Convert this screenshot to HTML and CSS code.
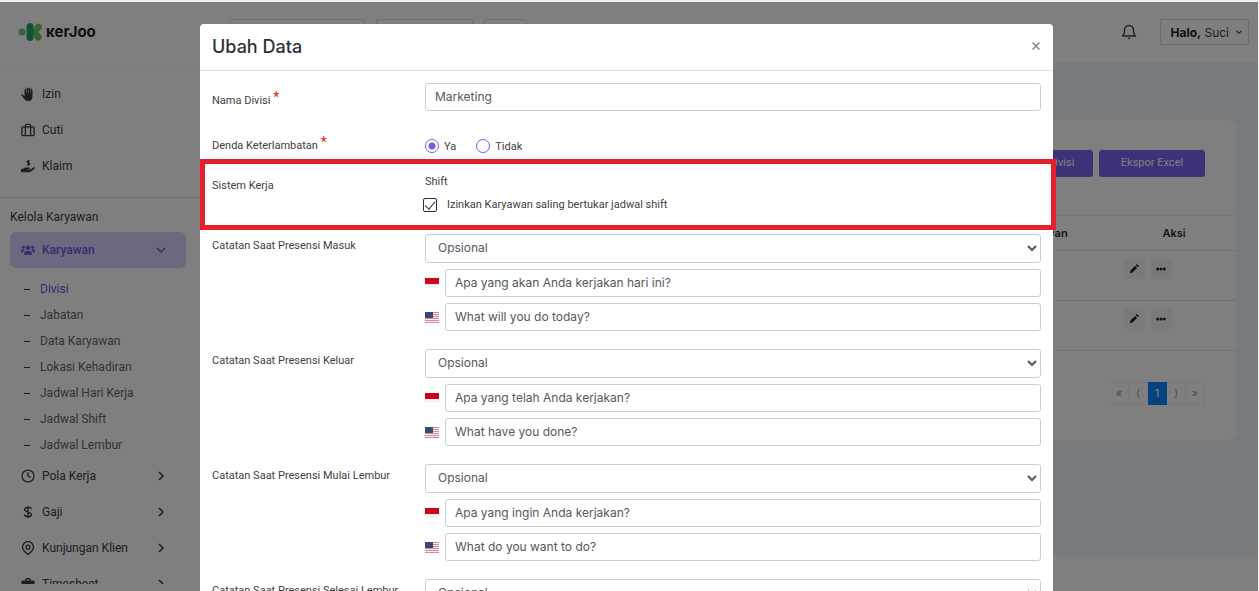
FILE: index.html
```html
<!DOCTYPE html>
<html lang="id">
<head>
<meta charset="utf-8">
<title>Kerjoo - Divisi</title>
<link rel="stylesheet" href="styles.css">
</head>
<body>
<div class="app">
  <aside class="sidebar">
    <a class="brand" href="#">
      <svg class="brand-mark" width="24" height="20" viewBox="0 0 24 20" aria-hidden="true">
        <circle cx="4" cy="10" r="3.5" fill="#74c365"/>
        <path d="M14 9.500 17.500 3a3.400 3.400 0 0 1 5.500 4.200L20.500 10l2.500 3a3.400 3.400 0 0 1-5.500 4.200L14 10.500Z" fill="#74c365"/>
        <rect x="8.500" y="1" width="7" height="18" rx="3.500" fill="#26a081"/>
      </svg>
      <span class="brand-name">ĸerJoo</span>
    </a>
    <nav class="menu">
      <a class="item" href="#"><svg class="icon" viewBox="0 0 16 16" aria-hidden="true"><path fill="currentColor" d="M4 3.200a.9.900 0 0 1 1.900 0V7h.5V1.700a.9.900 0 0 1 1.900 0V7h.5V1.400a.9.900 0 0 1 1.900 0V7h.5V3a.9.900 0 0 1 1.900 0V11c0 3-1.800 5-4.800 5-2.300 0-3.600-.9-4.700-2.600L.5 9.800c-.6-1 .7-1.900 1.500-1.100L4 10.500z"/></svg><span>Izin</span></a>
      <a class="item" href="#"><svg class="icon line" viewBox="0 0 16 16" aria-hidden="true"><rect x="1" y="4.500" width="14" height="10" rx="1.500"/><path d="M5 14.500V3a1.500 1.500 0 0 1 1.500-1.500h3A1.500 1.500 0 0 1 11 3v11.500"/></svg><span>Cuti</span></a>
      <a class="item" href="#"><svg class="icon" viewBox="0 0 16 16" aria-hidden="true"><path fill="currentColor" d="M0 11h2.500c1.500-1.300 2.500-1.300 4-1.300h3c1.300 0 1.300 1.800 0 1.800H7.500v.5h3l3.500-2.300c1.300-.8 2.500.6 1.500 1.500l-4 3.200c-.5.400-1 .6-1.600.6H0z"/><path d="M10 2.500c-.5-.8-3-.7-3 .6 0 1.400 3 .8 3 2.200 0 1.300-2.600 1.300-3.200.4M8.500 1v7" fill="none" stroke="currentColor" stroke-width="1.300"/></svg><span>Klaim</span></a>
    </nav>
    <h2 class="group-title">Kelola Karyawan</h2>
    <nav class="menu-scroll">
      <a class="item active" href="#"><svg class="icon" viewBox="0 0 16 16" aria-hidden="true"><g fill="currentColor"><circle cx="8" cy="5.500" r="2.600"/><circle cx="2.700" cy="4.800" r="1.700"/><circle cx="13.300" cy="4.800" r="1.700"/><path d="M3.500 13.500v-1.800C3.500 10 5 9 6.500 9h3c1.500 0 3 1 3 2.700v1.800zM0 10.500V9c0-1.300.8-2 2-2h1.500l.8.700C3.200 8.500 2.700 9.300 2.600 10.500zM16 10.500V9c0-1.300-.8-2-2-2h-1.500l-.8.700c1.100.8 1.600 1.600 1.700 2.800z"/></g></svg><span>Karyawan</span><svg class="chev" viewBox="0 0 12 12" aria-hidden="true"><path d="m2 4 4 4 4-4"/></svg></a>
      <ul class="sub">
        <li class="current"><a href="#">Divisi</a></li>
        <li><a href="#">Jabatan</a></li>
        <li><a href="#">Data Karyawan</a></li>
        <li><a href="#">Lokasi Kehadiran</a></li>
        <li><a href="#">Jadwal Hari Kerja</a></li>
        <li><a href="#">Jadwal Shift</a></li>
        <li><a href="#">Jadwal Lembur</a></li>
      </ul>
      <a class="item" href="#"><svg class="icon line" viewBox="0 0 16 16" aria-hidden="true"><circle cx="8" cy="8" r="6.800"/><path d="M8 3.800V8l2.800 1.600"/></svg><span>Pola Kerja</span><svg class="chev" viewBox="0 0 12 12" aria-hidden="true"><path d="m4 2 4 4-4 4"/></svg></a>
      <a class="item" href="#"><svg class="icon line" viewBox="0 0 16 16" aria-hidden="true"><path d="M8 .8v14.400M11.800 4.800C11.600 2 4.200 2 4.200 5.200S12 7.800 12 11s-8 3-8-.2"/></svg><span>Gaji</span><svg class="chev" viewBox="0 0 12 12" aria-hidden="true"><path d="m4 2 4 4-4 4"/></svg></a>
      <a class="item" href="#"><svg class="icon line" viewBox="0 0 16 16" aria-hidden="true"><path d="M8 15.300S1.800 11 1.800 6.900a6.200 6.200 0 0 1 12.400 0C14.200 11 8 15.300 8 15.300z"/><circle cx="8" cy="7" r="2.200"/></svg><span>Kunjungan Klien</span><svg class="chev" viewBox="0 0 12 12" aria-hidden="true"><path d="m4 2 4 4-4 4"/></svg></a>
      <a class="item" href="#"><svg class="icon" viewBox="0 0 16 16" aria-hidden="true"><path fill="currentColor" d="M5 4V2.500C5 1.700 5.700 1 6.500 1h3c.8 0 1.500.7 1.500 1.500V4h3c.8 0 1.500.7 1.500 1.500V14H.5V5.500C.5 4.700 1.200 4 2 4zm1.500 0h3V2.500h-3z"/></svg><span>Timesheet</span><svg class="chev" viewBox="0 0 12 12" aria-hidden="true"><path d="m4 2 4 4-4 4"/></svg></a>
    </nav>
  </aside>

  <div class="content">
    <header class="topbar">
      <div class="chips"><span class="chip wide"></span><span class="chip mid"></span><span class="chip small"></span></div>
      <button class="bell" type="button" aria-label="Notifikasi"><svg width="16" height="16" viewBox="0 0 16 16" aria-hidden="true"><path d="M1.500 12h13c-1.300-1.200-2-2.200-2-4.500V6a4.500 4.500 0 0 0-9 0v1.500c0 2.300-.7 3.300-2 4.500z" fill="none" stroke="currentColor" stroke-width="1.400" stroke-linejoin="round"/><path d="M6.300 13.800h3.400L8 15.500z" fill="currentColor"/></svg></button>
      <button class="user" type="button"><span><b>Halo,</b> Suci</span><svg width="8" height="8" viewBox="0 0 12 12" aria-hidden="true"><path d="m2 4 4 4 4-4" fill="none" stroke="currentColor" stroke-width="1.600"/></svg></button>
    </header>
    <main class="main">
      <section class="card">
        <div class="actions"><button class="primary" type="button">Tambah Divisi</button><button class="primary" type="button">Ekspor Excel</button></div>
        <table class="grid">
          <thead><tr><th></th><th class="count">Jumlah Karyawan</th><th class="act">Aksi</th></tr></thead>
          <tbody>
            <tr><td></td><td></td><td><div class="tools"><button type="button" aria-label="Ubah"><svg viewBox="0 0 12 12" aria-hidden="true"><path fill="currentColor" d="M1 11l.7-3.200L7.200 2.300l2.500 2.500-5.500 5.500zM8 1.500l.8-.8c.4-.4 1-.4 1.400 0l1.100 1.100c.4.400.4 1 0 1.400l-.8.800z"/></svg></button><button type="button" aria-label="Lainnya"><svg viewBox="0 0 12 12" aria-hidden="true"><g fill="currentColor"><circle cx="2" cy="6" r="1.800"/><circle cx="6" cy="6" r="1.800"/><circle cx="10" cy="6" r="1.800"/></g></svg></button></div></td></tr>
            <tr><td></td><td></td><td><div class="tools"><button type="button" aria-label="Ubah"><svg viewBox="0 0 12 12" aria-hidden="true"><path fill="currentColor" d="M1 11l.7-3.200L7.200 2.300l2.500 2.500-5.500 5.500zM8 1.500l.8-.8c.4-.4 1-.4 1.400 0l1.100 1.100c.4.400.4 1 0 1.400l-.8.800z"/></svg></button><button type="button" aria-label="Lainnya"><svg viewBox="0 0 12 12" aria-hidden="true"><g fill="currentColor"><circle cx="2" cy="6" r="1.800"/><circle cx="6" cy="6" r="1.800"/><circle cx="10" cy="6" r="1.800"/></g></svg></button></div></td></tr>
          </tbody>
        </table>
        <nav class="pager"><a href="#">«</a><a href="#">⟨</a><a class="on" href="#">1</a><a href="#">⟩</a><a href="#">»</a></nav>
      </section>
    </main>
    <footer class="footer"></footer>
  </div>

  <div class="backdrop">
    <form class="dialog" role="dialog" aria-labelledby="dialog-title">
      <div class="dialog-head"><h1 id="dialog-title">Ubah Data</h1><button class="close" type="button" aria-label="Tutup"><svg width="10" height="10" viewBox="0 0 10 10" aria-hidden="true"><path d="m1.500 1.500 7 7m0-7-7 7" stroke="currentColor" stroke-width="1.500"/></svg></button></div>
      <div class="dialog-body">
        <div class="row name-row"><label class="label" for="nama">Nama Divisi <sup>*</sup></label><input class="control" id="nama" type="text" value="Marketing"></div>
        <div class="row fine-row" role="radiogroup" aria-labelledby="denda"><span class="label" id="denda">Denda Keterlambatan <sup>*</sup></span>
          <div class="radios"><label><input type="radio" name="denda" checked>Ya</label><label><input type="radio" name="denda">Tidak</label></div></div>
        <div class="row shift-row"><span class="label">Sistem Kerja</span>
          <div class="shift"><span class="shift-name">Shift</span><label class="check"><input type="checkbox" checked>Izinkan Karyawan saling bertukar jadwal shift</label></div></div>

        <div class="row note-row"><label class="label" for="masuk">Catatan Saat Presensi Masuk</label>
          <div class="notes"><select class="control" id="masuk"><option>Opsional</option></select>
            <div class="lang"><svg class="flag" viewBox="0 0 14 10" role="img" aria-label="Indonesia"><path fill="#d0021b" d="M0 0h14v6H0z"/><path fill="#f7f2f3" d="M0 6h14v4H0z"/></svg><input class="control" type="text" aria-label="Indonesia" value="Apa yang akan Anda kerjakan hari ini?"></div>
            <div class="lang"><svg class="flag us" viewBox="0 0 14 11" role="img" aria-label="English"><use href="#us"/></svg><input class="control" type="text" aria-label="English" value="What will you do today?"></div></div></div>

        <div class="row note-row"><label class="label" for="keluar">Catatan Saat Presensi Keluar</label>
          <div class="notes"><select class="control" id="keluar"><option>Opsional</option></select>
            <div class="lang"><svg class="flag" viewBox="0 0 14 10" role="img" aria-label="Indonesia"><path fill="#d0021b" d="M0 0h14v6H0z"/><path fill="#f7f2f3" d="M0 6h14v4H0z"/></svg><input class="control" type="text" aria-label="Indonesia" value="Apa yang telah Anda kerjakan?"></div>
            <div class="lang"><svg class="flag us" viewBox="0 0 14 11" role="img" aria-label="English"><use href="#us"/></svg><input class="control" type="text" aria-label="English" value="What have you done?"></div></div></div>

        <div class="row note-row"><label class="label" for="mulai">Catatan Saat Presensi Mulai Lembur</label>
          <div class="notes"><select class="control" id="mulai"><option>Opsional</option></select>
            <div class="lang"><svg class="flag" viewBox="0 0 14 10" role="img" aria-label="Indonesia"><path fill="#d0021b" d="M0 0h14v6H0z"/><path fill="#f7f2f3" d="M0 6h14v4H0z"/></svg><input class="control" type="text" aria-label="Indonesia" value="Apa yang ingin Anda kerjakan?"></div>
            <div class="lang"><svg class="flag us" viewBox="0 0 14 11" role="img" aria-label="English"><use href="#us"/></svg><input class="control" type="text" aria-label="English" value="What do you want to do?"></div></div></div>

        <div class="row note-row"><label class="label" for="selesai">Catatan Saat Presensi Selesai Lembur</label>
          <div class="notes"><select class="control" id="selesai"><option>Opsional</option></select></div></div>
      </div>
    </form>
  </div>
</div>
<svg class="defs" width="0" height="0" aria-hidden="true"><defs><g id="us"><path fill="#fbeef0" d="M0 0h14v11H0z"/><path stroke="#d98a99" stroke-width="1" d="M0 .5h14M0 2.500h14M0 4.500h14M0 6.500h14M0 8.500h14M0 10.500h14"/><path fill="#3c4870" d="M0 0h8v6H0z"/></g></defs></svg>
</body>
</html>
```
FILE: styles.css
```css
* { box-sizing: border-box; }

body {
  margin: 0;
  height: 100vh;
  overflow: hidden;
  border-top: 2px solid #eaf0f1;
  border-right: 1px solid #f4f4f4;
  font-family: Inter, "Open Sans", sans-serif;
  font-size: 11px;
  color: #3c3f44;
}

a { color: inherit; text-decoration: none; }
button { font: inherit; color: inherit; cursor: pointer; }

.app {
  position: relative;
  display: flex;
  height: 100%;
  overflow: hidden;
  background: #fff;
}

/* Sidebar */
.sidebar {
  flex: 0 0 200px;
  display: flex;
  flex-direction: column;
  padding-bottom: 7px;
  font-family: Roboto, sans-serif;
  font-size: 12px;
  color: #3a3d42;
}

.brand {
  flex: none;
  display: flex;
  align-items: center;
  gap: 4px;
  height: 69px;
  padding: 0 0 9px 18px;
  border-bottom: 1px solid #f6f6f6;
}

.brand-name {
  font: 700 15px/20px Inter, sans-serif;
  color: #1d1d2b;
}

.menu {
  flex: none;
  padding: 5px 10px 13px;
  border-bottom: 1px solid #dcdcdc;
}

.item {
  display: flex;
  align-items: center;
  gap: 7px;
  height: 36px;
  padding: 0 19px 0 11px;
  border-radius: 6px;
}

.icon { flex: none; width: 14px; height: 14px; }
.line { fill: none; stroke: currentColor; stroke-width: 1.5; stroke-linejoin: round; }
.chev { width: 12px; height: 12px; margin-left: auto; fill: none; stroke: currentColor; stroke-width: 1.5; }

.group-title {
  flex: none;
  margin: 0;
  padding: 12px 10px 8px;
  font-size: 12px;
  line-height: 14px;
  font-weight: 400;
}

.menu-scroll {
  flex: 1;
  min-height: 0;
  padding: 0 14px 0 10px;
  overflow: hidden;
}

.active { background: #d8d0ff; color: #6a5ad8; font-weight: 500; }

.sub {
  margin: 0;
  padding: 8px 0 0 14px;
  list-style: none;
  color: #63666a;
}

.sub li { display: flex; align-items: center; gap: 10px; height: 26px; }
.sub li::before { content: ""; width: 6px; height: 1px; background: #3a3d42; }
.sub .current { color: #6a5ad8; }

/* Page area */
.content { flex: 1; display: flex; flex-direction: column; min-width: 0; }

.topbar {
  flex: none;
  display: flex;
  align-items: center;
  height: 60px;
  padding: 0 9px 0 29px;
}

.chips { display: flex; gap: 11px; margin-right: auto; }
.chip { height: 26px; border: 1px solid #e2e2e2; border-radius: 3px; }
.wide { width: 136px; }
.mid { width: 97px; }
.small { width: 43px; }

.bell { display: flex; margin-right: 23px; padding: 0; border: 0; background: none; }

.user {
  display: flex;
  align-items: center;
  gap: 6px;
  height: 26px;
  padding: 0 5px 0 10px;
  border: 1px solid #d8d8d8;
  border-radius: 3px;
  background: none;
  font-size: 12px;
}
.user b { color: #222; }

.main { flex: 1; padding: 58px 22px 0; background: #f0f7fa; }
.card { height: 320px; border-radius: 8px; background: #fff; }

.actions {
  display: flex;
  justify-content: flex-end;
  gap: 6px;
  padding: 30px 31px 38px 0;
}

.primary {
  width: 106px;
  height: 27px;
  padding: 0 0 2px;
  border: 0;
  border-radius: 3px;
  background: #7664ee;
  color: #fff;
  font-family: Roboto, sans-serif;
}

.grid { width: 100%; border-collapse: collapse; table-layout: fixed; }
.grid th { height: 35px; padding: 0; border-top: 1px solid #eceff0; font-weight: 600; color: #2c2e33; }
.grid td { height: 50px; padding: 0; border-top: 1px solid #e2e6e8; border-bottom: 1px solid #e2e6e8; vertical-align: top; }
.count { width: 184px; }
.act { width: 124px; }

.tools { display: flex; gap: 6px; justify-content: center; padding: 8px 53px 0 0; }
.tools button { display: flex; flex: none; align-items: center; justify-content: center; width: 21px; height: 20px; padding: 0; border: 0; border-radius: 3px; background: #f5f5fb; color: #222; }
.tools svg { width: 10px; height: 10px; }

.pager { display: flex; justify-content: flex-end; padding: 31px 31px 0 0; }
.pager a { width: 19px; height: 23px; border: 1px solid #f0f0f0; border-left: 0; line-height: 21px; text-align: center; color: #999; }
.pager .on { border-color: #0a84ff; background: #0a84ff; color: #fff; }

.footer { flex: none; height: 35px; }

/* Dialog */
.backdrop {
  position: absolute;
  inset: 0;
  padding: 22px 205px 0 200px;
  background: rgba(0, 0, 0, .5);
}

.dialog { min-height: 100%; border-radius: 4px; background: #fff; font-family: Roboto, sans-serif; }

.dialog-head {
  display: flex;
  align-items: center;
  justify-content: space-between;
  height: 47px;
  padding: 0 12px 2px;
  border-bottom: 1px solid #dfe3e6;
}
.dialog-head h1 { margin: 0; font: 500 18px Inter, sans-serif; color: #2f3136; }
.close { display: flex; padding: 0; border: 0; background: none; color: #85888c; }

.dialog-body { padding-top: 12px; }

.row { display: grid; grid-template-columns: 213px 1fr; padding: 0 12px; }
.label { line-height: 14px; }
.label sup { font-size: 14px; line-height: 0; color: #e0202c; vertical-align: 2px; }

.control {
  width: 100%;
  height: 28px;
  padding: 0 9px 1px;
  border: 1px solid #c9ced2;
  border-radius: 3px;
  background: #fff;
  font: 400 12px Inter, sans-serif;
  color: #55585c;
}
select.control { height: 29px; padding: 0 0 2px 8px; }

.name-row { height: 48px; }
.name-row .label { padding-top: 11px; }

.fine-row { height: 28px; align-items: center; }
.fine-row .label { padding-top: 2px; }

.radios { display: flex; gap: 20px; padding-top: 2px; }
.radios label, .check { display: flex; align-items: center; }
.radios label { gap: 5px; }

input[type="radio"] {
  appearance: none;
  width: 14px;
  height: 14px;
  margin: 0;
  border: 1px solid #6f5fdc;
  border-radius: 50%;
}
input[type="radio"]:checked { background: radial-gradient(circle, #6f5fdc 3px, #fff 4px); }

.shift-row { position: relative; height: 71px; }
.shift-row::after {
  content: "";
  position: absolute;
  inset: 0 -3px 0 0;
  border: 5px solid #e3202c;
  pointer-events: none;
}
.shift-row .label { padding-top: 20px; }

.shift { padding-top: 16px; }
.shift-name { display: block; margin-bottom: 9px; line-height: 14px; }
.check { gap: 10px; margin-left: -2px; line-height: 14px; }

input[type="checkbox"] {
  appearance: none;
  display: flex;
  justify-content: center;
  width: 14px;
  height: 14px;
  margin: 0;
  border: 1px solid #2c2e33;
  border-radius: 2px;
}
input[type="checkbox"]:checked::before {
  content: "";
  width: 5px;
  height: 9px;
  border: solid #2c2e33;
  border-width: 0 1px 1px 0;
  transform: rotate(40deg);
}

.note-row { padding-top: 4px; padding-bottom: 14px; }
.note-row .label { padding-top: 5px; }
.notes { display: grid; gap: 6px; }
.lang { display: flex; align-items: center; gap: 6px; }
.flag { flex: none; width: 14px; height: 10px; }
.us { height: 11px; }

.defs { position: absolute; }
```
